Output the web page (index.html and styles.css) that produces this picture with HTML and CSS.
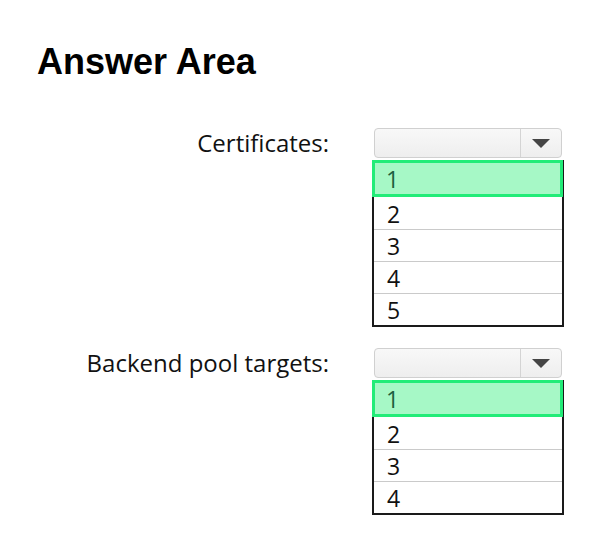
FILE: index.html
```html
<!doctype html>
<html lang="en">

<head>
    <meta charset="utf-8">
    <meta name="viewport" content="width=device-width, initial-scale=1">
    <title>Answer Area</title>
    <link rel="stylesheet" href="styles.css">
</head>

<body>
    <h1 class="title">Answer Area</h1>

    <div class="field">
        <span class="field-label">Certificates:</span>
        <div class="control">
            <div class="combo">
                <span class="combo-value"></span>
                <span class="combo-button"><span class="arrow"></span></span>
            </div>
            <ul class="options">
                <li class="option selected">1</li>
                <li class="option">2</li>
                <li class="option">3</li>
                <li class="option">4</li>
                <li class="option">5</li>
            </ul>
        </div>
    </div>

    <div class="field">
        <span class="field-label">Backend pool targets:</span>
        <div class="control">
            <div class="combo">
                <span class="combo-value"></span>
                <span class="combo-button"><span class="arrow"></span></span>
            </div>
            <ul class="options">
                <li class="option selected">1</li>
                <li class="option">2</li>
                <li class="option">3</li>
                <li class="option">4</li>
            </ul>
        </div>
    </div>
</body>

</html>
```

FILE: styles.css
```css
body {
    margin: 0;
    padding: 0 0 0 37px;
    background-color: white;
    color: black;
    font-family: "Open Sans", "Noto Sans", sans-serif;
}

.title {
    font-family: "Liberation Sans", Arial, sans-serif;
    font-size: 36px;
    font-weight: bold;
    line-height: 40px;
    margin: 42px 0 46px 0;
}

.field {
    display: flex;
    align-items: flex-start;
    margin-bottom: 21px;
}

.field-label {
    width: 292px;
    text-align: right;
    font-size: 24px;
    line-height: 30px;
    margin-right: 43px;
    color: #111;
}

.control {
    width: 192px;
}

.combo {
    display: flex;
    height: 28px;
    margin: 0 2px;
    border: 1px solid #d0d0d0;
    border-radius: 4px;
    background: linear-gradient(#f8f8f8, #eeeeee);
}

.combo-value {
    flex: 1;
}

.combo-button {
    width: 40px;
    border-left: 1px solid #d4d4d4;
    display: flex;
    align-items: center;
    justify-content: center;
}

.arrow {
    width: 0;
    height: 0;
    border-left: 9px solid transparent;
    border-right: 9px solid transparent;
    border-top: 9px solid #454545;
}

.options {
    list-style: none;
    margin: 2px 0 0 0;
    padding: 0;
    border: 2px solid #1a1a1a;
}

.option {
    height: 32px;
    line-height: 33px;
    padding-left: 13px;
    font-size: 23px;
    color: #111;
}

.option + .option {
    height: 31px;
    border-top: 1px solid #cacaca;
}

/* highlighted entry sits over the list frame */
.selected {
    height: 31px;
    line-height: 32px;
    padding-left: 11px;
    margin: -2px -1px 0 -2px;
    border: 3px solid #22ec78;
    background-color: #a6f8c6;
    color: #1d5e3e;
}

.selected + .option {
    border-top-color: transparent;
}
```
